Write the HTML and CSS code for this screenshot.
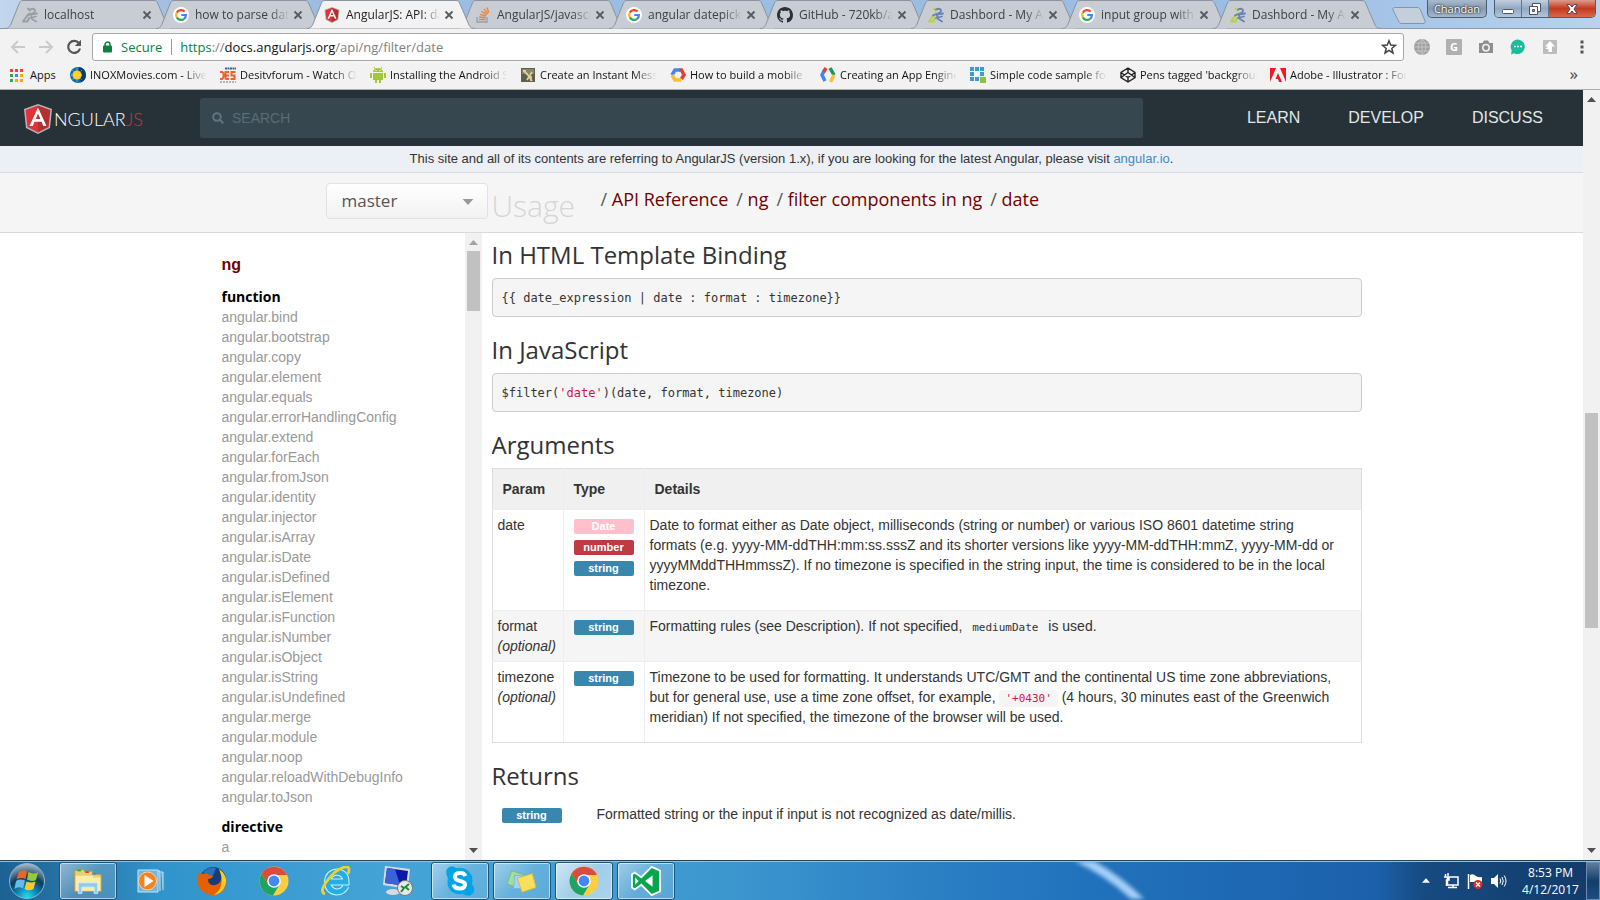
FILE: index.html
```html
<!DOCTYPE html>
<html lang="en">
<head>
<meta charset="utf-8">
<title>AngularJS: API: date</title>
<link rel="stylesheet" href="styles.css">
</head>
<body>
<svg class="defs" aria-hidden="true">
  <symbol id="tab-shape" viewBox="0 0 168 29"><path d="M0 28.500C4 28.500 5 26 6 24L14 4C15 1.500 16 .5 18 .5H149C151 .5 152 1.500 153 4L162 25C163 27.500 165 28.500 168 28.500"/></symbol>
  <symbol id="google" viewBox="0 0 16 16"><circle cx="8" cy="8" r="8" fill="#fff"/><path fill="none" stroke="#ea4335" stroke-width="2.200" d="M3.800 5.600A4.900 4.900 0 0 1 11.600 4.600"/><path fill="none" stroke="#fbbc05" stroke-width="2.200" d="M3.800 5.600A5 5 0 0 0 3.800 10.400"/><path fill="none" stroke="#34a853" stroke-width="2.200" d="M3.800 10.400A4.900 4.900 0 0 0 11.200 11.800"/><path fill="none" stroke="#4285f4" stroke-width="2.200" d="M11.200 11.800A4.700 4.700 0 0 0 12.900 8H8.200"/></symbol>
  <symbol id="runner" viewBox="0 0 16 16"><g fill="none" stroke-linecap="round" stroke-linejoin="round"><path class="r1" stroke-width="2" d="M6 1.500L8 3.500M7.500 6.500L5 9L1 14.500H5.500L7 11"/><path class="r2" stroke-width="1.800" d="M8 2.500C12 .5 14.500 3.500 12 5.500L5 8.500M9 7.500L15 6.500M9 8.500L10 12L14 14.500M8 11L14 9.500"/></g></symbol>
  <symbol id="close" viewBox="0 0 10 10"><path d="M1.500 1.500L8.500 8.500M8.500 1.500L1.500 8.500" fill="none" stroke="#555a60" stroke-width="1.800"/></symbol>
  <symbol id="shield" viewBox="0 0 28 30"><path fill="#b3b8bb" d="M14 0L28 5L26 24L14 30L2 24L0 5Z"/><path fill="#e23237" d="M14 1.500L1.600 6L3.400 23L14 28.400Z"/><path fill="#b52e31" d="M14 1.500L26.400 6L24.600 23L14 28.400Z"/><path fill="#fff" fill-rule="evenodd" d="M14 3.500L5.500 22H8.800L10.500 17.800H17.500L19.300 22H22.500ZM14 9.500L16.400 15H11.700Z"/></symbol>
  <symbol id="chrome" viewBox="0 0 30 30"><circle cx="15" cy="15" r="14.500" fill="#ffcd41"/><path fill="#dd4b3e" d="M2.500 7.700A14.500 14.500 0 0 1 28 9H15L9 18Z"/><path fill="#1da462" d="M2.500 7.700A14.500 14.500 0 0 0 14 29.500L20.800 18L9.500 18.500Z"/><circle cx="15" cy="15" r="6.800" fill="#fff"/><circle cx="15" cy="15" r="5.400" fill="#4688f1"/></symbol>
  <symbol id="up" viewBox="0 0 9 5"><path d="M0 5L4.500 0L9 5Z"/></symbol>
  <symbol id="down" viewBox="0 0 9 5"><path d="M0 0L4.500 5L9 0Z"/></symbol>
</svg>

<header class="chrome">
  <div class="tabstrip">
    <div class="tab"><svg class="tab-bg"><use href="#tab-shape"/></svg><svg class="fav gray"><use href="#runner"/></svg><span class="tab-title">localhost</span><button class="tab-close" aria-label="Close"><svg><use href="#close"/></svg></button></div>
    <div class="tab"><svg class="tab-bg"><use href="#tab-shape"/></svg><svg class="fav"><use href="#google"/></svg><span class="tab-title">how to parse date</span><button class="tab-close" aria-label="Close"><svg><use href="#close"/></svg></button></div>
    <div class="tab active"><svg class="tab-bg"><use href="#tab-shape"/></svg><svg class="fav"><use href="#shield"/></svg><span class="tab-title">AngularJS: API: date</span><button class="tab-close" aria-label="Close"><svg><use href="#close"/></svg></button></div>
    <div class="tab"><svg class="tab-bg"><use href="#tab-shape"/></svg><svg class="fav" viewBox="0 0 16 16"><path fill="none" stroke="#98a1a8" stroke-width="1.400" d="M2 10V15H12V10"/><path fill="none" stroke="#ee8434" stroke-width="1.400" d="M4 12.500H10.500M4.200 10L10.600 10.800M4.800 7.400L11 9M6.500 4.400L12 7.600M9 2L12.800 6.600M12 .5L13.800 5.500"/></svg><span class="tab-title">AngularJS/javascript</span><button class="tab-close" aria-label="Close"><svg><use href="#close"/></svg></button></div>
    <div class="tab"><svg class="tab-bg"><use href="#tab-shape"/></svg><svg class="fav"><use href="#google"/></svg><span class="tab-title">angular datepicker</span><button class="tab-close" aria-label="Close"><svg><use href="#close"/></svg></button></div>
    <div class="tab"><svg class="tab-bg"><use href="#tab-shape"/></svg><svg class="fav" viewBox="0 0 16 16"><path fill="#2b3038" d="M8 0C3.580 0 0 3.580 0 8c0 3.540 2.290 6.530 5.470 7.590.4.070.55-.17.55-.38 0-.19-.01-.82-.01-1.490-2.010.37-2.530-.49-2.690-.94-.09-.23-.48-.94-.82-1.130-.28-.15-.68-.52-.01-.53.630-.01 1.080.58 1.230.82.720 1.210 1.870.87 2.330.66.070-.52.280-.87.510-1.070-1.780-.2-3.640-.89-3.640-3.950 0-.87.310-1.590.82-2.150-.08-.2-.36-1.020.08-2.120 0 0 .67-.21 2.200.82.640-.18 1.320-.27 2-.27s1.360.09 2 .27c1.530-1.040 2.200-.82 2.200-.82.440 1.100.16 1.920.08 2.120.51.560.82 1.270.82 2.150 0 3.070-1.870 3.750-3.650 3.950.29.250.54.730.54 1.480 0 1.070-.01 1.930-.01 2.200 0 .21.150.46.55.38A8.010 8.010 0 0 0 16 8c0-4.420-3.580-8-8-8Z"/></svg><span class="tab-title">GitHub - 720kb/angular</span><button class="tab-close" aria-label="Close"><svg><use href="#close"/></svg></button></div>
    <div class="tab"><svg class="tab-bg"><use href="#tab-shape"/></svg><svg class="fav color"><use href="#runner"/></svg><span class="tab-title">Dashbord - My App</span><button class="tab-close" aria-label="Close"><svg><use href="#close"/></svg></button></div>
    <div class="tab"><svg class="tab-bg"><use href="#tab-shape"/></svg><svg class="fav"><use href="#google"/></svg><span class="tab-title">input group with</span><button class="tab-close" aria-label="Close"><svg><use href="#close"/></svg></button></div>
    <div class="tab"><svg class="tab-bg"><use href="#tab-shape"/></svg><svg class="fav color"><use href="#runner"/></svg><span class="tab-title">Dashbord - My App</span><button class="tab-close" aria-label="Close"><svg><use href="#close"/></svg></button></div>
    <button class="newtab" aria-label="New tab"><svg viewBox="0 0 34 17"><path fill="#c5cfdb" stroke="#8195ae" d="M2.500 .5H25C27 .5 28 1.500 29 4L33 14C33.500 16 33 16.500 31 16.500H10C8 16.500 7 15.500 6 13L1 3C.5 1.500 1 .5 2.500 .5Z"/></svg></button>
    <div class="window-controls">
      <button class="user">Chandan</button>
      <div class="winbtns">
        <button aria-label="Minimize"><svg viewBox="0 0 14 14"><rect x="1.500" y="7.500" width="11" height="4" rx="1" fill="#fff" stroke="#4a5568"/></svg></button>
        <button aria-label="Restore"><svg viewBox="0 0 14 14"><g fill="#fff" stroke="#4a5568"><path d="M4.500 1.500H12.500V9.500H4.500Z"/><path d="M1.500 4.500H9.500V12.500H1.500Z"/><path fill="#8ea3bf" d="M4.500 7.500H6.500V9.500H4.500Z"/></g></svg></button>
        <button class="shut" aria-label="Close window"><svg viewBox="0 0 14 14"><path d="M2 2.500H5L7 5L9 2.500H12L9 7L12 11.500H9L7 9L5 11.500H2L5 7Z" fill="#fff" stroke="#5a4550"/></svg></button>
      </div>
    </div>
  </div>

  <div class="toolbar">
    <button aria-label="Back"><svg viewBox="0 0 16 16"><path d="M15 8H2M8 2L2 8L8 14" fill="none" stroke="#cacaca" stroke-width="2"/></svg></button>
    <button aria-label="Forward"><svg viewBox="0 0 16 16"><path d="M1 8H14M8 2L14 8L8 14" fill="none" stroke="#cacaca" stroke-width="2"/></svg></button>
    <button aria-label="Reload"><svg viewBox="0 0 16 16"><path d="M13 4.200A6 6 0 1 0 14 9.500" fill="none" stroke="#555" stroke-width="2.200"/><path d="M15 .8V7H8.800Z" fill="#555"/></svg></button>
    <div class="omnibox">
      <svg class="lock" viewBox="0 0 9 12"><rect y="4.500" width="9" height="7" rx="1" fill="#0b8043"/><path d="M2 5.500V3.500A2.500 2.500 0 0 1 7 3.500V5.500" fill="none" stroke="#0b8043" stroke-width="1.500"/></svg>
      <span class="secure">Secure</span>
      <span class="url"><span class="scheme">https</span>://<b>docs.angularjs.org</b>/api/ng/filter/date</span>
      <button class="star" aria-label="Bookmark"><svg viewBox="0 0 16 16"><path d="M8 1.800L9.700 6.100L14.400 6.400L10.800 9.400L12 14L8 11.400L4 14L5.200 9.400L1.600 6.400L6.300 6.100Z" fill="none" stroke="#444" stroke-width="1.500"/></svg></button>
    </div>
    <div class="extensions">
      <button aria-label="Globe"><svg viewBox="0 0 16 16"><circle cx="8" cy="8" r="8" fill="#a0a0a0"/><path d="M8 0V16M0 8H16M1.500 4H14.500M1.500 12H14.500M8 0C3 4 3 12 8 16M8 0C13 4 13 12 8 16" stroke="#ccc" fill="none" stroke-width=".8"/></svg></button>
      <button class="g-ext" aria-label="Grammar">G</button>
      <button aria-label="Camera"><svg viewBox="0 0 16 16"><path fill="#8e8e8e" d="M1 4H4.500L6 1.500H10L11.500 4H15V14H1Z"/><circle cx="8" cy="8.800" r="3.200" fill="none" stroke="#f2f2f2" stroke-width="1.500"/></svg></button>
      <button aria-label="Chat"><svg viewBox="0 0 16 16"><path fill="#1bbc9b" d="M8 .5A7.300 7.300 0 1 1 4 14.200L1 15.500L1.700 11.500A7.300 7.300 0 0 1 8 .5Z"/><path d="M4 7.500H6M7 7.500H9M10 7.500H12" stroke="#fff" stroke-width="1.600"/></svg></button>
      <button aria-label="Upload"><svg viewBox="0 0 16 16"><rect x="1" y="1" width="14" height="14" rx="1" fill="#bcbcbc"/><path fill="#fff" d="M8 2L13 7.500H10V13H6.500V10H3.500L6 7.500H3Z"/></svg></button>
      <button aria-label="Menu"><svg viewBox="0 0 16 16"><path d="M6.500 1.500H9.500V4.500H6.500ZM6.500 6.500H9.500V9.500H6.500ZM6.500 11.500H9.500V14.500H6.500Z" fill="#555"/></svg></button>
    </div>
  </div>

  <nav class="bookmarks">
    <a class="apps" href="#"><svg viewBox="0 0 13 13"><path fill="#ea4335" d="M0 0H3V3H0ZM5 0H8V3H5ZM10 0H13V3H10Z"/><path fill="#34a853" d="M0 5H3V8H0ZM0 10H3V13H0Z"/><path fill="#4285f4" d="M5 5H8V8H5Z"/><path fill="#fbaa05" d="M10 5H13V8H10ZM5 10H8V13H5ZM10 10H13V13H10Z"/></svg>Apps</a>
    <a class="bm" href="#"><svg viewBox="0 0 16 16"><circle cx="8" cy="8" r="8" fill="#0c6cb0"/><path fill="#0a3e70" d="M9 0A8 8 0 0 1 11 15.300L8 8Z"/><circle cx="7" cy="8" r="4.600" fill="#ffcb27"/><path d="M7 1.500V14.500M1 8H13M2.800 3.500L11.500 12.500M11.500 3.500L2.800 12.500" stroke="#ffd64e" stroke-dasharray="1 1"/></svg><span>INOXMovies.com - Live</span></a>
    <a class="bm" href="#"><svg viewBox="0 0 16 16"><path d="M0 5H2C4.500 5 4 12 1.500 12H0M5.500 12.500V5H9M6 8.500H9M5.500 12H9M15.500 5H11.500V8.500H14.500V12H10.500" fill="none" stroke="#ee6231" stroke-width="2"/><path d="M5 1.500H16" stroke="#2c6794" stroke-width="2" stroke-dasharray="2 .5"/><path d="M0 15H16" stroke="#777" stroke-dasharray="2 1"/></svg><span>Desitvforum - Watch Online</span></a>
    <a class="bm" href="#"><svg viewBox="0 0 16 16"><path fill="#a4c639" d="M3 5A5 4 0 0 1 13 5ZM3 6H13V13H3ZM0 6H2V11H0ZM14 6H16V11H14ZM5 13H7V16H5ZM9 13H11V16H9Z"/><path d="M4 0L6 3M12 0L10 3" stroke="#a4c639"/><path d="M5.500 3.500H6.500M9.500 3.500H10.500" stroke="#fff"/></svg><span>Installing the Android SDK</span></a>
    <a class="bm" href="#"><svg viewBox="0 0 16 16"><path fill="#625e4c" d="M1 1H15V15H1Z"/><path fill="#8b8568" d="M2 2H14V7H2Z"/><path d="M4 4L8 8L12 14M12 5L7 13M3 4H6M11 9V14" stroke="#e0cda0" stroke-width="1.800" fill="none"/></svg><span>Create an Instant Messenger</span></a>
    <a class="bm" href="#"><svg viewBox="0 0 16 16"><g fill="none" stroke-width="3.500"><path stroke="#4285f4" d="M2 8L5 3H9"/><path stroke="#db4437" d="M9 3H11.500L14 8L11.500 12"/><path stroke="#fbc02d" d="M2 8L5 13H11.500"/></g></svg><span>How to build a mobile app</span></a>
    <a class="bm" href="#"><svg viewBox="0 0 16 16"><g fill="none" stroke-width="3.500"><path stroke="#4285f4" d="M4 4L2 8L5 14"/><path stroke="#db4437" d="M6 1L3.500 5"/><path stroke="#0f9d58" d="M10 1L14 8"/><path stroke="#fbc02d" d="M14 8L10.500 15"/></g></svg><span>Creating an App Engine</span></a>
    <a class="bm" href="#"><svg viewBox="0 0 16 16"><path fill="#3e9bd0" d="M0 0H4V4H0ZM5 0H9V4H5ZM10 0H14V4H10ZM0 5H4V9H0ZM10 5H14V9H10ZM0 10H4V14H0ZM5 10H9V14H5Z"/><path fill="#8fc13e" d="M10 10H16V16H10Z"/></svg><span>Simple code sample for</span></a>
    <a class="bm" href="#"><svg viewBox="0 0 16 16"><path d="M8 1L15 5.500V10.500L8 15L1 10.500V5.500ZM1 5.500L8 10.500L15 5.500M1 10.500L8 5.500L15 10.500M8 1V5.500M8 10.500V15" fill="none" stroke="#222" stroke-width="1.400"/></svg><span>Pens tagged 'background</span></a>
    <a class="bm" href="#"><svg viewBox="0 0 16 16"><path fill="#ed1c24" d="M0 1H6L0 15ZM10 1H16V15ZM8 6L12 15H9L8 12H5.500Z"/></svg><span>Adobe - Illustrator : For</span></a>
    <button class="more" aria-label="More bookmarks">»</button>
  </nav>
</header>

<div class="viewport">
  <div class="page">
    <header class="site-header">
      <a class="logo" href="#"><svg><use href="#shield"/></svg><span>NGULAR<i>JS</i></span></a>
      <label class="search"><svg viewBox="0 0 12 12"><circle cx="5" cy="5" r="3.800" fill="none" stroke="#5d7681" stroke-width="2"/><path d="M7.800 7.800L11.200 11.200" stroke="#5d7681" stroke-width="2.200"/></svg><input type="text" placeholder="SEARCH" aria-label="Search"></label>
      <nav class="site-nav"><a href="#">LEARN</a><a href="#">DEVELOP</a><a href="#">DISCUSS</a></nav>
    </header>
    <p class="notice">This site and all of its contents are referring to AngularJS (version 1.x), if you are looking for the latest Angular, please visit <a href="#">angular.io</a>.</p>
    <div class="subheader">
      <div class="container subheader-row">
        <div class="version"><select aria-label="Version"><option>master</option></select><svg><use href="#down"/></svg></div>
        <span class="ghost">Usage</span>
        <ol class="crumbs"><li><a href="#">API Reference</a></li><li><a href="#">ng</a></li><li><a href="#">filter components in ng</a></li><li><a href="#">date</a></li></ol>
      </div>
    </div>
    <div class="container columns">
      <aside class="side">
        <nav class="side-list">
          <a class="module" href="#">ng</a>
          <h5>function</h5>
          <a href="#">angular.bind</a><a href="#">angular.bootstrap</a><a href="#">angular.copy</a><a href="#">angular.element</a><a href="#">angular.equals</a><a href="#">angular.errorHandlingConfig</a><a href="#">angular.extend</a><a href="#">angular.forEach</a><a href="#">angular.fromJson</a><a href="#">angular.identity</a><a href="#">angular.injector</a><a href="#">angular.isArray</a><a href="#">angular.isDate</a><a href="#">angular.isDefined</a><a href="#">angular.isElement</a><a href="#">angular.isFunction</a><a href="#">angular.isNumber</a><a href="#">angular.isObject</a><a href="#">angular.isString</a><a href="#">angular.isUndefined</a><a href="#">angular.merge</a><a href="#">angular.module</a><a href="#">angular.noop</a><a href="#">angular.reloadWithDebugInfo</a><a href="#">angular.toJson</a>
          <h5>directive</h5>
          <a href="#">a</a>
        </nav>
        <div class="scrollbar side-scroll"><svg><use href="#up"/></svg><div class="track"><div class="thumb"></div></div><svg><use href="#down"/></svg></div>
      </aside>
      <main class="content">
        <h2>In HTML Template Binding</h2>
        <pre>{{ date_expression | date : format : timezone}}</pre>
        <h2>In JavaScript</h2>
        <pre>$filter(<span class="str">'date'</span>)(date, format, timezone)</pre>
        <h2>Arguments</h2>
        <table class="args">
          <thead><tr><th class="c-param">Param</th><th class="c-type">Type</th><th>Details</th></tr></thead>
          <tbody>
            <tr><td>date</td><td class="types"><a class="badge date" href="#">Date</a><a class="badge number" href="#">number</a><a class="badge" href="#">string</a></td><td><p>Date to format either as Date object, milliseconds (string or number) or various ISO 8601 datetime string formats (e.g. yyyy-MM-ddTHH:mm:ss.sssZ and its shorter versions like yyyy-MM-ddTHH:mmZ, yyyy-MM-dd or yyyyMMddTHHmmssZ). If no timezone is specified in the string input, the time is considered to be in the local timezone.</p></td></tr>
            <tr><td>format<div><em>(optional)</em></div></td><td class="types"><a class="badge" href="#">string</a></td><td><p>Formatting rules (see Description). If not specified, <code>mediumDate</code> is used.</p></td></tr>
            <tr><td>timezone<div><em>(optional)</em></div></td><td class="types"><a class="badge" href="#">string</a></td><td><p>Timezone to be used for formatting. It understands UTC/GMT and the continental US time zone abbreviations, but for general use, use a time zone offset, for example, <code class="str">'+0430'</code> (4 hours, 30 minutes east of the Greenwich meridian) If not specified, the timezone of the browser will be used.</p></td></tr>
          </tbody>
        </table>
        <h2>Returns</h2>
        <div class="returns"><a class="badge" href="#">string</a><span>Formatted string or the input if input is not recognized as date/millis.</span></div>
      </main>
    </div>
  </div>
  <div class="scrollbar page-scroll"><svg><use href="#up"/></svg><div class="track"><div class="thumb"></div></div><svg><use href="#down"/></svg></div>
</div>

<footer class="taskbar">
  <svg class="streak" viewBox="0 0 90 38"><path d="M4 -4Q40 12 72 44" fill="none" stroke="#a5d0f8" stroke-width="9"/></svg>
  <button class="start" aria-label="Start"><svg viewBox="0 0 38 38"><defs><radialGradient id="orb" cx=".5" cy=".95" r=".95"><stop offset="0" stop-color="#19e0fb"/><stop offset=".4" stop-color="#086e9e"/><stop offset=".6" stop-color="#0d3a5d"/><stop offset="1" stop-color="#a8bfce"/></radialGradient></defs><circle cx="19" cy="19" r="17.500" fill="url(#orb)" stroke="#88b9d2"/><path fill="#ee6425" d="M11 10Q15 7 19 9.500L17.500 17Q13 15 8.500 17.500Z"/><path fill="#96c93d" d="M20.500 10Q25 12.500 30 10.500L28 18Q24 20 19 17.500Z"/><path fill="#68b9ec" d="M8 19Q12 16.500 17 18.500L15 26.500Q10.500 24 6.500 27Z"/><path fill="#fdc82b" d="M18.500 19.500Q23 21.500 27.500 19.500L25.500 27Q21 29.500 16.500 27Z"/></svg></button>
  <button class="task open first" aria-label="Explorer"><svg viewBox="0 0 34 30"><path fill="#e9ce73" stroke="#bb9841" d="M2 3L12 2L13 4L22 4V7L32 8V27H2Z"/><path fill="#fbeda5" d="M3 9H22L23 11H31V26H3Z"/><path d="M5 3H9" stroke="#16b235" stroke-width="2"/><path d="M14 5H18" stroke="#d4422c" stroke-width="2"/><path d="M22 7H26" stroke="#3c8ee0" stroke-width="2"/><path fill="#90cbeb" stroke="#d5f2fd" d="M6 17H28V29H24V22H10V29H6Z"/></svg></button>
  <button class="task" aria-label="Media Player"><svg viewBox="0 0 30 30"><path fill="#70b6dd" stroke="#c9e5f4" d="M3 4H23V26H3ZM23 5H25V25M26 6H28V24"/><circle cx="12.500" cy="15" r="9" fill="#f58220" stroke="#fbd2a8"/><path fill="#fff" d="M9.500 9L18.500 15L9.500 21Z"/></svg></button>
  <button class="task" aria-label="Firefox"><svg viewBox="0 0 30 30"><circle cx="16" cy="14" r="13" fill="#173d78"/><path fill="#2a73b8" d="M6 6Q12 0 19 2L15 12Z"/><path fill="#e66000" d="M3 4Q2 8 5 8Q9 6 12 9L16 10Q15 13 11 13Q11 20 18 19Q25 18 25 7Q32 14 28 22Q23 30 14 29Q2 27 .5 16Q0 9 3 4Z"/><path fill="#fdcb27" d="M22 3Q32 10 28 20Q25 28 17 29Q27 22 24 9Z"/></svg></button>
  <button class="task" aria-label="Chrome"><svg><use href="#chrome"/></svg></button>
  <button class="task" aria-label="Internet Explorer"><svg viewBox="0 0 30 30"><path d="M25 20Q22 26 15.500 26Q7 25 6.500 16Q7 7 16 6Q25 7 25 16H9" fill="none" stroke="#c3f1fb" stroke-width="7"/><path d="M25 20Q22 26 15.500 26Q7 25 6.500 16Q7 7 16 6Q25 7 25 16H9" fill="none" stroke="#25aee4" stroke-width="5"/><path d="M4 28Q-2 26 6 15Q15 3 24 1Q30 0 27 8" fill="none" stroke="#f5cf26" stroke-width="2.800"/></svg></button>
  <button class="task" aria-label="Remote Desktop"><svg viewBox="0 0 30 30"><ellipse cx="10" cy="26" rx="7" ry="3" fill="#d8dadd"/><path fill="#d8dadd" d="M2 0L27 3L25 23L0 19Z"/><path fill="#0a18a5" d="M4 2L25 5L23 20L2 17Z"/><path fill="#3c62d8" d="M4 2L12 3L17 19L2 17Z"/><circle cx="22" cy="22" r="7.500" fill="#e8e8e4" stroke="#777"/><path d="M18 20L21 22L18 26M26 18L22.500 21L26 24" stroke="#228b3a" stroke-width="2" fill="none"/></svg></button>
  <button class="task open" aria-label="Skype"><svg viewBox="0 0 30 30"><path fill="#00a4e8" d="M2 3Q6-2 11 2Q22 0 27 10Q28 15 27 18Q32 25 26 29Q22 31 18 28Q7 30 3 20Q2 16 3 12Q0 7 2 3Z"/><path d="M20.500 10Q19 6.500 14.500 7Q9.500 7.500 10 11Q10 14 15 15Q20.500 16 20 19Q19 23 14.500 22.500Q9.500 22.500 8.500 18.500" fill="none" stroke="#fff" stroke-width="4"/></svg></button>
  <button class="task open" aria-label="Sticky Notes"><svg viewBox="0 0 32 30"><path fill="#a2df9d" stroke="#75be77" d="M5 4L17 8L13 23L0 18Z"/><path fill="#a5d3f5" stroke="#77b5e4" d="M8 9L22 9L22 23L7 23Z"/><path fill="#f8e05e" stroke="#d4b63b" d="M11 12L27 7L31 22L16 27Z"/></svg></button>
  <button class="task open current" aria-label="Chrome window"><svg><use href="#chrome"/></svg></button>
  <button class="task open" aria-label="Visual Studio"><svg viewBox="0 0 32 32"><path fill="#06a64f" stroke="#fff" stroke-width="2" d="M22 1L31 5V27L22 31L11 20L4 25L1 23V9L4 7L11 12Z"/><path fill="#fff" d="M23 10V22L15 16ZM4.500 12L8 16L4.500 20Z"/></svg></button>
  <div class="tray">
    <svg class="tray-up"><use href="#up"/></svg>
    <svg class="tray-icon" viewBox="0 0 16 16"><path d="M4.500 4H15V12H4.500ZM10 12V14.500M5 14.500H14M2.500 1V4M5 0V3M1 4H6V7H3.500V13" fill="none" stroke="#fff" stroke-width="1.500"/></svg>
    <svg class="tray-icon" viewBox="0 0 16 16"><path d="M1.500 1V16" stroke="#fff" stroke-width="1.500"/><path fill="#fff" d="M3 2Q6 0 9 3Q12 5 15 4V9L3 9Z"/><circle cx="11" cy="11.500" r="4.500" fill="#dc2a20"/><path d="M9 9.500L13 13.500M13 9.500L9 13.500" stroke="#fff" stroke-width="1.500"/></svg>
    <svg class="tray-icon" viewBox="0 0 16 16"><path fill="#fff" d="M0 5H3L7 1V15L3 11H0Z"/><path d="M9 5.500Q10.500 8 9 10.500M11 4Q13.500 8 11 12M13.200 2.500Q16.800 8 13.200 13.500" fill="none" stroke="#fff"/></svg>
    <time class="clock">8:53 PM<br>4/12/2017</time>
    <button class="show-desktop" aria-label="Show desktop"></button>
  </div>
</footer>
</body>
</html>
```
FILE: styles.css
```css
* { box-sizing: border-box; }

body {
  margin: 0;
  height: 100vh;
  display: flex;
  flex-direction: column;
  overflow: hidden;
  background: #fff;
  color: #333;
  font: 14px/20px "Liberation Sans", Arial, sans-serif;
}

a { text-decoration: none; color: inherit; }
button { border: 0; padding: 0; background: none; font: inherit; color: inherit; display: flex; align-items: center; justify-content: center; }
svg { display: block; flex: none; }
.defs { position: absolute; width: 0; height: 0; }

/* browser frame */
.chrome { flex: none; background: #f2f2f2; border-bottom: 1px solid #adadad; font: 11px/16px "Open Sans", sans-serif; }

.tabstrip { display: flex; height: 29px; padding-left: 5px; background: linear-gradient(90deg, #c2d6ee, #9dbce0 12%, #9bbde4 80%, #b9d3ee); border-bottom: 1px solid #8f99a5; }
.tab { position: relative; display: flex; align-items: center; width: 168px; height: 29px; flex: none; margin-right: -17px; padding-left: 17px; color: #3c4146; }
.tab-bg { position: absolute; inset: 0; width: 168px; height: 29px; fill: #c8cdd3; stroke: #8a939f; }
.tab.active { z-index: 1; color: #222; }
.active .tab-bg { fill: #f2f2f2; }
.fav { position: relative; width: 16px; height: 16px; }
.r1 { stroke: var(--body); }
.r2 { stroke: var(--limbs); }
.gray { --body: #9b9fa4; --limbs: #9b9fa4; }
.color { --body: #b9cf4c; --limbs: #6683b8; }
.tab-title { position: relative; width: 94px; margin: 0 4px 0 6px; overflow: hidden; white-space: nowrap; font-size: 12px; mask-image: linear-gradient(90deg, #000 80%, transparent); }
.tab-close { position: relative; }
.tab-close svg { width: 10px; height: 10px; }
.newtab { margin: 7px 0 0 28px; align-items: flex-start; }
.newtab svg { width: 34px; height: 17px; }
.window-controls { display: flex; gap: 7px; margin-left: auto; padding-right: 4px; height: 18px; }
.user { width: 60px; height: 18px; border: 1px solid #4e5d6e; border-top: 0; border-radius: 0 0 5px 5px; background: linear-gradient(#a9bacd, #8599b0 50%, #a5b8cd); color: #fff; text-shadow: 0 0 2px #222, 0 0 2px #222; }
.winbtns { display: flex; border: 1px solid #4e5d6e; border-top: 0; border-radius: 0 0 5px 5px; overflow: hidden; }
.winbtns button { width: 27px; height: 17px; background: linear-gradient(#c2cfde, #92a8c2 50%, #b2c5da); border-right: 1px solid #66758a; }
.winbtns .shut { width: 46px; border: 0; background: linear-gradient(#dd9b8c, #c23a20 50%, #d9674a); }
.winbtns svg { width: 14px; height: 14px; }

.toolbar { display: flex; align-items: center; height: 36px; padding: 4px 10px 4px 10px; }
.toolbar > button { width: 16px; margin-right: 12px; }
.toolbar > button:nth-child(3) { margin-right: 10px; }
.toolbar svg { width: 16px; height: 16px; }
.omnibox { flex: 1; display: flex; align-items: center; height: 28px; padding: 0 6px 0 10px; background: #fff; border: 1px solid #a6a6a6; border-radius: 3px; font-size: 13px; }
.omnibox .lock { width: 9px; height: 12px; margin-right: 9px; }
.secure { color: #0b8043; padding-right: 9px; border-right: 1px solid #999; margin-right: 8px; }
.url { color: #808080; }
.url b { font-weight: 400; color: #111; }
.scheme { color: #0b8043; }
.star { margin-left: auto; }
.extensions { display: flex; gap: 16px; margin-left: 10px; }
.extensions button { width: 16px; height: 16px; }
.extensions .g-ext { background: #b0b0b0; border-radius: 1px; color: #fff; font-weight: 700; }

.bookmarks { display: flex; height: 24px; padding: 0 0 4px 10px; align-items: center; font-size: 11px; color: #111; }
.bookmarks a { display: flex; align-items: center; flex: none; }
.apps { width: 60px; gap: 7px; }
.apps svg { width: 13px; height: 13px; }
.bm { width: 150px; gap: 4px; }
.bm svg { width: 16px; height: 16px; }
.bm span { width: 117px; overflow: hidden; white-space: nowrap; mask-image: linear-gradient(90deg, #000 80%, transparent); }
.more { margin: 0 22px 2px auto; font-size: 17px; color: #444; }

/* page area */
.viewport { flex: 1; display: flex; min-height: 0; }
.page { flex: 1; min-width: 0; display: flex; flex-direction: column; }
.container { width: 100%; max-width: 1140px; margin: 0 auto; }

.scrollbar { width: 17px; flex: none; display: flex; flex-direction: column; align-items: center; justify-content: space-between; padding: 7px 0; background: #f1f1f1; fill: #505050; }
.scrollbar svg { width: 9px; height: 5px; }
.track { flex: 1; width: 13px; margin: 6px 0 5px; }
.thumb { background: #c1c1c1; }
.page-scroll .thumb { height: 215px; margin-top: 305px; }
.side-scroll .thumb { height: 60px; }
.side-scroll svg:first-child { fill: #a3a3a3; }

.site-header { display: flex; align-items: center; height: 56px; flex: none; padding: 0 40px 0 24px; background: #263238; }
.logo { display: flex; align-items: center; gap: 2px; width: 176px; padding-top: 2px; color: #fff; font: 300 18px/30px Lato, sans-serif; }
.logo svg { width: 28px; height: 30px; }
.logo i { font-style: normal; color: #c7343a; }
.search { flex: 1; display: flex; align-items: center; gap: 8px; height: 40px; padding-left: 12px; background: #37474f; border-radius: 3px; }
.search svg { width: 12px; height: 12px; }
.search input { flex: 1; border: 0; background: none; font: inherit; color: #fff; padding: 0; outline: 0; }
.search input::placeholder { color: #546e7a; }
.site-nav { display: flex; gap: 48px; margin-left: 104px; color: #e4e7e8; font-size: 16px; }

.notice { margin: 0; height: 27px; flex: none; padding-top: 3px; text-align: center; background: #eceff4; border-bottom: 1px solid #d8dcdf; font-size: 13px; }
.notice a { color: #428bca; }

.subheader { flex: none; background: #f5f5f5; border-bottom: 1px solid #dadada; height: 60px; }
.subheader-row { display: flex; align-items: flex-start; padding-top: 10px; font-family: "Open Sans", sans-serif; }
.version { position: relative; width: 162px; margin: 0 4px 0 104px; }
.version select { width: 100%; height: 36px; padding: 0 15px; appearance: none; border: 1px solid #e2e2e2; border-radius: 4px; background: linear-gradient(#fff, #f2f2f2); font: 17px/24px "Open Sans", sans-serif; color: #555; }
.version svg { position: absolute; right: 14px; top: 16px; width: 12px; height: 6px; fill: #999; }
.ghost { width: 109px; font-size: 30px; font-weight: 300; line-height: 46px; color: #d6d6d6; }
.crumbs { display: flex; gap: 8px; margin: 0; padding: 4px 0 0; list-style: none; font-size: 18px; line-height: 24px; color: #555; }
.crumbs li { white-space: nowrap; }
.crumbs li::before { content: "/ "; }
.crumbs a { color: #6f0101; }

.columns { flex: 1; min-height: 0; display: flex; gap: 10px; }
.side { width: 260px; flex: none; display: flex; }
.side-list { flex: 1; overflow: hidden; padding-top: 20px; color: #999; }
.side-list a { display: block; }
.side-list .module { margin: 2px 0 12px; color: #6f0101; font: 700 16px/20px "Liberation Sans", Arial, sans-serif; }
.side-list h5 { margin: 10px 0 0; color: #000; font: 700 14px/20px "Open Sans", sans-serif; }

.content { flex: 1; min-width: 0; overflow: hidden; }
h2 { margin: 20px 0 10px; font: 400 24px/26px "Open Sans", sans-serif; color: #333; }
.content h2:first-child { margin-top: 9px; }
pre { margin: 0; padding: 10px 9px 8px; border: 1px solid #ccc; border-radius: 4px; background: #f5f5f5; font: 12px/19px "DejaVu Sans Mono", monospace; }
.str { color: #dd1144; }
code { padding: 2px 6px; border-radius: 4px; background: #f5f5f5; font: 11px/16px "DejaVu Sans Mono", monospace; }

.args { width: 100%; border-collapse: collapse; border: 1px solid #ddd; }
.args th { padding: 10px; text-align: left; background: #f0f0f0; border: 1px solid #eee; }
.args td { padding: 5px; vertical-align: top; border: 1px solid #eee; }
.args tr > :first-child { border-left-color: #ddd; }
.args tr > :last-child { border-right-color: #ddd; }
.args thead th { border-top-color: #ddd; }
.args tbody tr:last-child td { border-bottom-color: #ddd; }
.args tr:nth-child(even) td { background: #f5f5f5; }
.args p { margin: 0 17px 10px 0; }
.c-param { width: 71px; }
.c-type { width: 81px; }
.args .types { padding: 9px 10px 5px; }
.badge { display: block; width: 60px; height: 15px; margin-bottom: 6px; border-radius: 2px; background: #3a87ad; color: #fff; text-align: center; font: 700 11px/15px "Liberation Sans", Arial, sans-serif; }
.badge.date { background: pink; }
.badge.number { background: #bd3b41; }
.returns { display: flex; gap: 35px; padding: 5px 10px; }
.returns .badge { margin-top: 4px; }

/* taskbar */
.taskbar { position: relative; flex: none; display: flex; align-items: center; height: 40px; border-top: 1px solid #21445c; box-shadow: inset 0 1px #8fc3e4; overflow: hidden;
  background: linear-gradient(90deg, #1c6293, #2a7cae 6%, #3095cc 10%, #45a4d7 25%, #3d97cf 45%, #2b80c4 58%, #2172bc 68%, #1c60ab 86%, #174a80 89%, #123a69); }
.streak { position: absolute; left: 67%; top: 0; width: 90px; height: 38px; filter: blur(2px); }
.start { width: 38px; margin: 0 13px 0 8px; }
.start svg { width: 38px; height: 38px; }
.task { width: 58px; height: 38px; margin-right: 4px; }
.task svg { width: 30px; height: 30px; }
.task.open { border: 1px solid #1d5479; border-radius: 3px; box-shadow: inset 0 0 0 1px #ffffff90; background: linear-gradient(135deg, #ffffff80, #ffffff30 50%, #ffffff20); }
.task.current { background: linear-gradient(135deg, #ffffffc0, #ffffff80 50%, #ffffff90); }
.tray { position: relative; display: flex; align-items: center; margin-left: auto; height: 100%; color: #fff; }
.tray-up { width: 8px; height: 5px; fill: #fff; margin-right: 13px; }
.tray-icon { width: 16px; height: 16px; margin-right: 8px; }
.clock { width: 71px; text-align: center; font: 12px/17px "Open Sans", sans-serif; }
.show-desktop { width: 14px; height: 38px; border: 1px solid #6d8cab; background: linear-gradient(#5e7d9c, #123d6b 50%, #1c4e82); }
```
